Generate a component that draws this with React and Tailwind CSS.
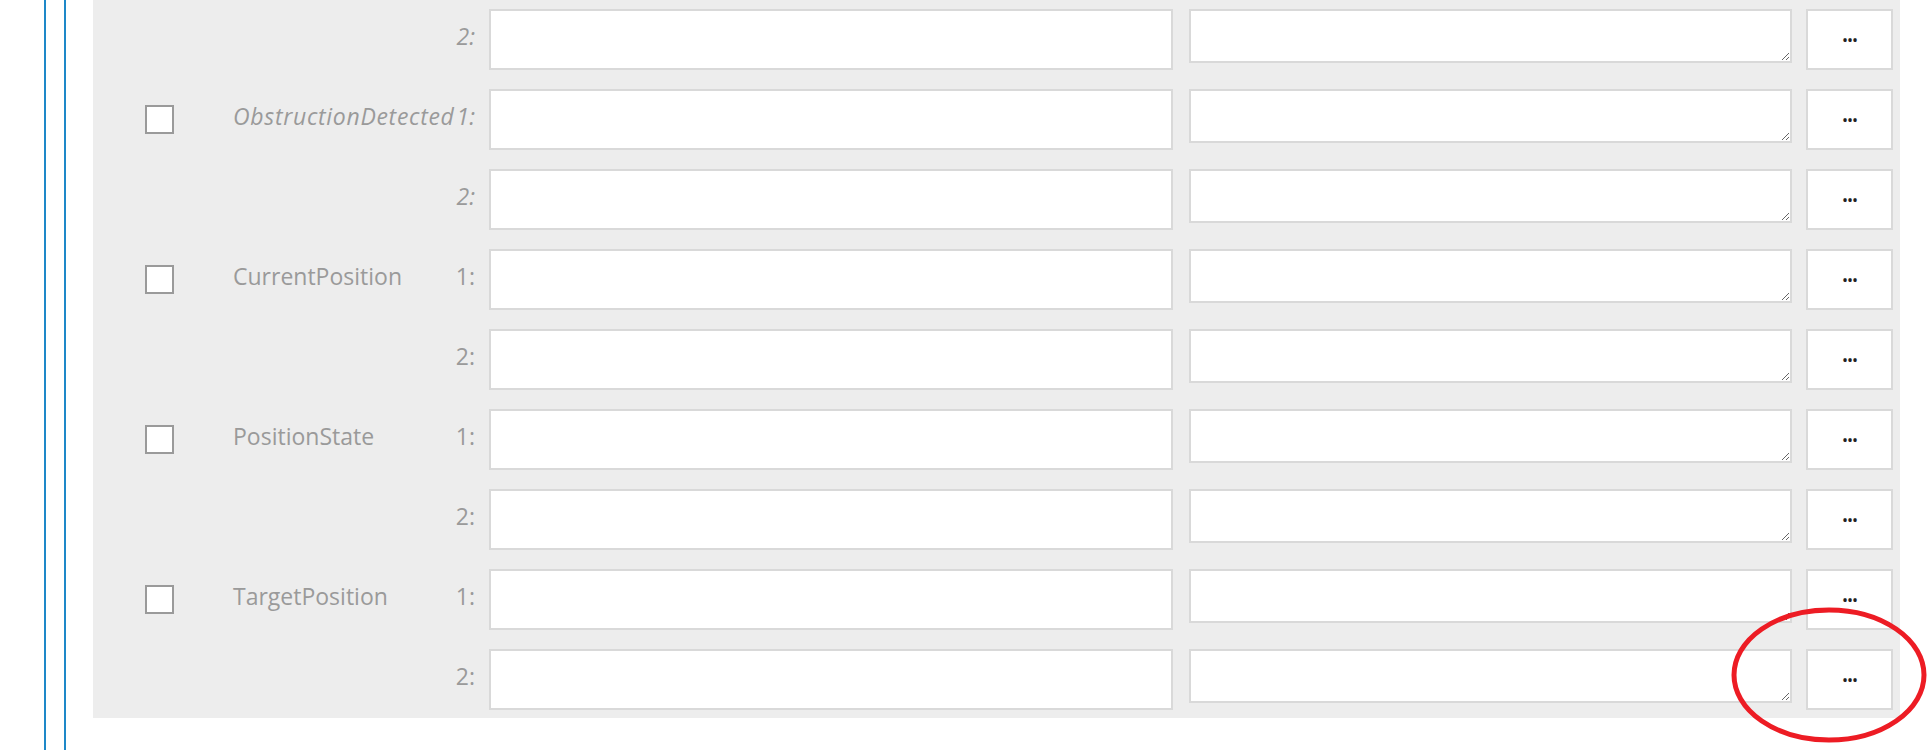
import React from 'react';

const groups = [
  { name: null, rows: ['2'], italic: true },
  { name: 'ObstructionDetected', rows: ['1', '2'], italic: true },
  { name: 'CurrentPosition', rows: ['1', '2'] },
  { name: 'PositionState', rows: ['1', '2'] },
  { name: 'TargetPosition', rows: ['1', '2'] },
];

function Row({ name, idx, italic, showCheck }) {
  return (
    <div className="flex h-[60px] items-start">
      {/* checkbox */}
      <div className="flex h-[60px] w-[88px] items-center">
        {showCheck && (
          <span className="block h-[29px] w-[29px] border-2 border-[#9a9a9a] bg-white" />
        )}
      </div>

      {/* labels */}
      <div
        className={`flex h-[60px] w-[242px] items-center justify-between whitespace-nowrap pb-[6px] text-[23px] leading-none text-[#9a9a9a] ${
          italic ? 'italic' : ''
        }`}
      >
        <span className={italic ? 'tracking-[0.7px]' : ''}>{name}</span>
        <span>{idx}:</span>
      </div>

      <input
        type="text"
        className="ml-[14px] h-[61px] w-[684px] border-2 border-[#d9d9d9] bg-white outline-none"
      />
      <textarea className="ml-[16px] h-[54px] w-[603px] border-2 border-[#d9d9d9] bg-white outline-none" />
      <button className="ml-[14px] flex h-[61px] w-[87px] items-center justify-center border-2 border-[#d9d9d9] bg-white text-[16px] leading-none tracking-[-1px] text-[#222]">
        •••
      </button>
    </div>
  );
}

export default function App() {
  return (
    <div
      className="relative h-[750px] w-[1928px] overflow-hidden bg-white"
      style={{ fontFamily: '"Open Sans", "Noto Sans", sans-serif' }}
    >
      <div className="ml-[44px] flex h-[750px] border-l-2 border-[#1e88c8] pl-[18px]">
        <div className="flex h-[750px] border-l-2 border-[#1e88c8] pl-[27px]">
          {/* gray property panel, scrolled so the top is cut off */}
          <div className="flex h-[718px] w-[1807px] flex-col gap-[20px] bg-[#ededed] pl-[52px] pt-[9px]">
            {groups.map((g, gi) =>
              g.rows.map((idx, ri) => (
                <Row
                  key={`${gi}-${ri}`}
                  name={ri === 0 ? g.name : null}
                  idx={idx}
                  italic={g.italic}
                  showCheck={ri === 0 && g.name}
                />
              ))
            )}
          </div>
        </div>
      </div>

      {/* red annotation ring */}
      <svg
        className="pointer-events-none absolute left-0 top-0"
        width="1928"
        height="750"
        viewBox="0 0 1928 750"
      >
        <ellipse cx="1829" cy="675" rx="95" ry="65" fill="none" stroke="#ed1c24" strokeWidth="5" />
      </svg>
    </div>
  );
}
